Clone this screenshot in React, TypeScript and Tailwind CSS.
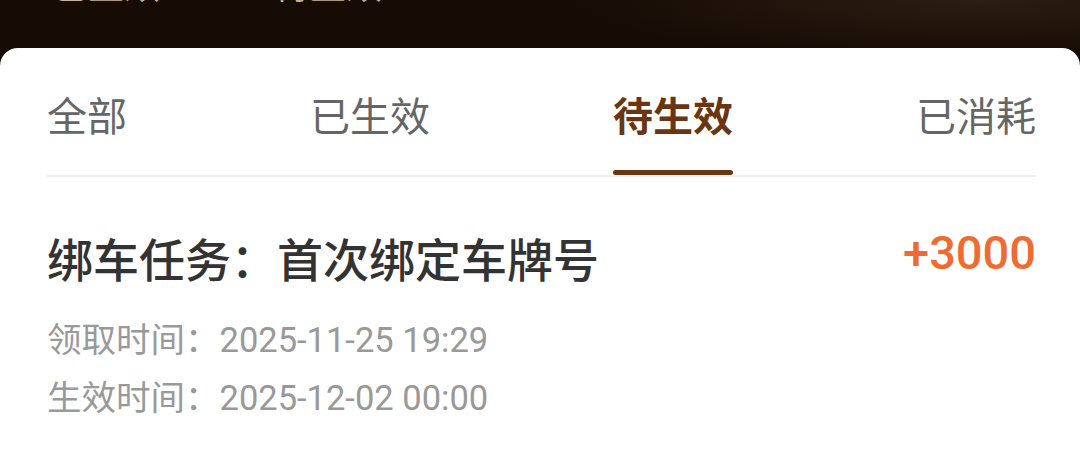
import React from 'react';

const tabs = ['全部', '已生效', '待生效', '已消耗'];
const activeTab = '待生效';

const App: React.FC = () => {
  return (
    <div
      className="w-[1080px] h-[450px] overflow-hidden bg-[#160b05]"
      style={{ fontFamily: 'Roboto, "Noto Sans CJK SC", sans-serif' }}
    >
      {/* dark header band, only the bottom of its labels is visible */}
      <div className="h-[48px] overflow-hidden bg-[radial-gradient(ellipse_420px_60px_at_980px_0px,#2a1d12,transparent)]">
        <div className="flex gap-[114px] pl-[52px] -mt-[31px] text-[36px] leading-none text-[#c8b190]">
          <span>已生效</span>
          <span>待生效</span>
        </div>
      </div>

      <div className="h-[402px] bg-white rounded-t-[18px] pl-[47px] pr-[44px] pt-[46px]">
        <div className="flex justify-between items-start border-b-2 border-[#efefef]">
          {tabs.map(tab => {
            const active = tab === activeTab;
            return (
              <div key={tab} className="flex flex-col items-stretch">
                <span
                  className={
                    active
                      ? 'text-[40px] leading-none font-bold text-[#6a3511]'
                      : 'text-[40px] leading-none text-[#666666]'
                  }
                  style={{ fontFamily: '"Noto Sans CJK SC", sans-serif' }}
                >
                  {tab}
                </span>
                {active ? (
                  <div className="mt-[36px] h-[5px] rounded-full bg-[#6a3511]" />
                ) : null}
              </div>
            );
          })}
        </div>

        <div className="flex justify-between items-start mt-[51px]">
          <div>
            <div
              className="mt-[6px] text-[46px] leading-none font-medium text-[#333333]"
              style={{ fontFamily: '"Noto Sans CJK SC", sans-serif' }}
            >
              绑车任务：首次绑定车牌号
            </div>
            <div className="mt-[31px] text-[34.5px] leading-[58px] text-[#999999]">
              <div>领取时间：2025-11-25 19:29</div>
              <div>生效时间：2025-12-02 00:00</div>
            </div>
          </div>
          <div className="mt-[1px] text-[47px] leading-none font-medium text-[#f06b32]">+3000</div>
        </div>
      </div>
    </div>
  );
};

export default App;
